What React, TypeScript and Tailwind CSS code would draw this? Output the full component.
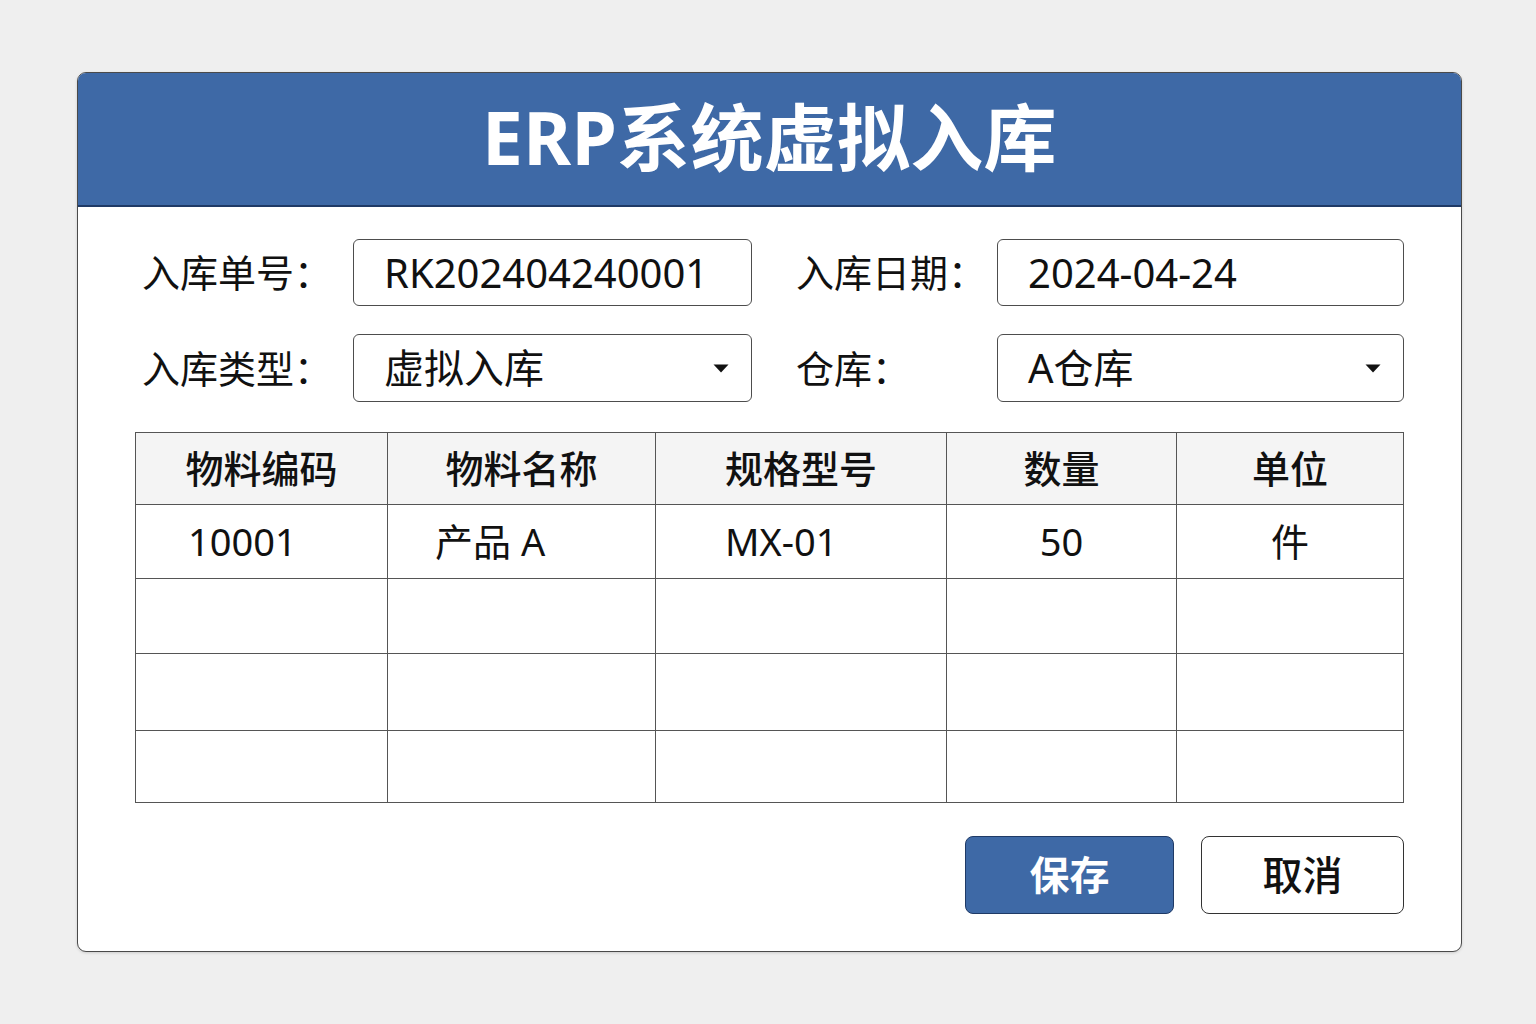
const font = { fontFamily: '"Noto Sans", "Noto Sans CJK SC", sans-serif' }

const columns = [
  { label: '物料编码', width: 'w-[252px]' },
  { label: '物料名称', width: 'w-[268px]' },
  { label: '规格型号', width: 'w-[291px]' },
  { label: '数量', width: 'w-[230px]' },
  { label: '单位', width: 'w-[227px]' },
]

function Caret() {
  return (
    <svg width="16" height="9" viewBox="0 0 16 9" className="shrink-0">
      <path d="M0.5 0.5h15L8 8.5z" fill="#111" />
    </svg>
  )
}

function Field({ value, select }: { value: string; select?: boolean }) {
  return (
    <div className="flex h-full w-full items-center justify-between rounded-[6px] border border-[#4d4d4d] bg-white pl-[30px] pr-[22px] text-[40px] text-[#111]">
      <span className="leading-none">{value}</span>
      {select && <Caret />}
    </div>
  )
}

export default function App() {
  return (
    <div className="min-h-screen w-full bg-[#efefef] pl-[77px] pt-[72px]" style={font}>
      <div className="w-[1385px] overflow-hidden rounded-[9px] border border-[#4a4a4a] bg-white shadow-[0_1px_3px_rgba(0,0,0,0.15)]">
        <div className="flex h-[134px] items-center justify-center border-b-2 border-[#1f3a66] bg-[#3e69a6] pb-[6px]">
          <h1 className="text-[73px] font-bold leading-none tracking-[0.3px] text-white">ERP系统虚拟入库</h1>
        </div>

        <div className="pb-[37px] pl-[57px] pr-[57px] pt-[32px]">
          <div className="flex flex-col gap-[28px]">
            <div className="flex h-[67px] items-center">
              <div className="w-[218px] pl-[7px] text-[38px] text-[#111]">入库单号：</div>
              <div className="h-full w-[399px]">
                <Field value="RK202404240001" />
              </div>
              <div className="w-[245px] pl-[44px] text-[38px] text-[#111]">入库日期：</div>
              <div className="h-full flex-1">
                <Field value="2024-04-24" />
              </div>
            </div>
            <div className="flex h-[68px] items-center">
              <div className="w-[218px] pl-[7px] text-[38px] text-[#111]">入库类型：</div>
              <div className="h-full w-[399px]">
                <Field value="虚拟入库" select />
              </div>
              <div className="w-[245px] pl-[44px] text-[38px] text-[#111]">仓库：</div>
              <div className="h-full flex-1">
                <Field value="A仓库" select />
              </div>
            </div>
          </div>

          <table className="mt-[30px] w-full border-collapse text-[38px] text-[#111]">
            <thead>
              <tr className="h-[72px] bg-[#f4f4f4]">
                {columns.map((c) => (
                  <th key={c.label} className={`${c.width} border border-[#555] text-center font-medium`}>
                    {c.label}
                  </th>
                ))}
              </tr>
            </thead>
            <tbody>
              <tr className="h-[74px]">
                <td className="border border-[#555] pl-[52px] text-left">10001</td>
                <td className="border border-[#555] pl-[47px] text-left">产品 A</td>
                <td className="border border-[#555] pl-[69px] text-left">MX-01</td>
                <td className="border border-[#555] text-center">50</td>
                <td className="border border-[#555] text-center">件</td>
              </tr>
              <tr className="h-[75px]">
                {columns.map((c) => (
                  <td key={c.label} className="border border-[#555]" />
                ))}
              </tr>
              <tr className="h-[77px]">
                {columns.map((c) => (
                  <td key={c.label} className="border border-[#555]" />
                ))}
              </tr>
              <tr className="h-[72px]">
                {columns.map((c) => (
                  <td key={c.label} className="border border-[#555]" />
                ))}
              </tr>
            </tbody>
          </table>

          <div className="mt-[33px] flex justify-end gap-[27px]">
            <button
              type="button"
              className="flex h-[78px] w-[209px] items-center justify-center rounded-[8px] border border-[#1f3a66] bg-[#3e69a6] text-[40px] font-bold text-white"
            >
              保存
            </button>
            <button
              type="button"
              className="flex h-[78px] w-[203px] items-center justify-center rounded-[8px] border border-[#333] bg-white text-[40px] font-medium text-[#111]"
            >
              取消
            </button>
          </div>
        </div>
      </div>
    </div>
  )
}
